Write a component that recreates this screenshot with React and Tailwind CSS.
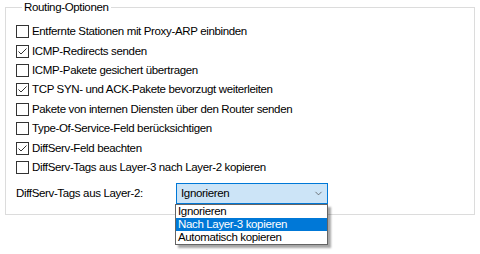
import { ChevronDown } from "lucide-react";

const OPTIONS = [
  { label: "Entfernte Stationen mit Proxy-ARP einbinden", checked: false },
  { label: "ICMP-Redirects senden", checked: true },
  { label: "ICMP-Pakete gesichert übertragen", checked: false },
  { label: "TCP SYN- und ACK-Pakete bevorzugt weiterleiten", checked: true },
  { label: "Pakete von internen Diensten über den Router senden", checked: false },
  { label: "Type-Of-Service-Feld berücksichtigen", checked: false },
  { label: "DiffServ-Feld beachten", checked: true },
  { label: "DiffServ-Tags aus Layer-3 nach Layer-2 kopieren", checked: false }
];

const CHOICES = ["Ignorieren", "Nach Layer-3 kopieren", "Automatisch kopieren"];

function Checkbox({ checked }) {
  return (
    <span className="flex h-[13px] w-[13px] shrink-0 items-center justify-center border border-[#333333] bg-white">
      {checked ? (
        <svg viewBox="0 0 11 11" className="h-[11px] w-[11px]" fill="none" stroke="#333333" strokeWidth="1">
          <path d="M1.5 5.5l2.5 2.5l5.5-5.5" />
        </svg>
      ) : null}
    </span>
  );
}

export default function App() {
  return (
    <div className="h-[254px] w-[480px] bg-white pt-px pl-[5px] text-[11.5px] tracking-[-0.35px] text-black [font-family:'Liberation_Sans',Arial,sans-serif]">
      <fieldset className="h-[214px] w-[470px] border border-[#dcdcdc] pl-[10px] pt-[8px]">
        <legend className="ml-[6px] px-[2px] leading-[13px]">Routing-Optionen</legend>

        <div className="flex flex-col">
          {OPTIONS.map((opt) => (
            <label key={opt.label} className="flex h-[19.4px] items-center gap-[3px]">
              <Checkbox checked={opt.checked} />
              <span className="leading-[13px]">{opt.label}</span>
            </label>
          ))}
        </div>

        <div className="mt-[6px] flex items-center">
          <span className="w-[160px]">DiffServ-Tags aus Layer-2:</span>
          <div className="relative">
            <div className="flex h-[21px] w-[152px] items-center justify-between border border-[#0078d7] bg-[#cce4f7] pl-[4px] pr-[3px]">
              <span>Ignorieren</span>
              <ChevronDown className="h-[11px] w-[11px] text-[#444]" strokeWidth={1.5} />
            </div>
            <ul className="absolute left-[-1px] top-full z-10 w-[153px] border border-[#646464] bg-white shadow-[3px_3px_2px_rgba(0,0,0,0.35)]">
              {CHOICES.map((c, i) => (
                <li
                  key={c}
                  className={
                    i === 1
                      ? "h-[13px] bg-[#0078d7] pl-[2px] leading-[13px] text-white"
                      : "h-[13px] pl-[2px] leading-[13px]"
                  }
                >
                  {c}
                </li>
              ))}
            </ul>
          </div>
        </div>
      </fieldset>
    </div>
  );
}
